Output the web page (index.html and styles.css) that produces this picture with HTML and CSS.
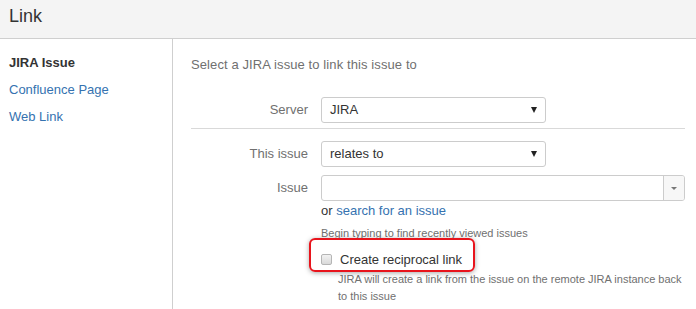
FILE: index.html
```html
<!DOCTYPE html>
<html lang="en">
<head>
    <meta charset="UTF-8">
    <title>Link</title>
    <link rel="stylesheet" href="styles.css">
</head>
<body>
    <header class="dialog-header">
        <h2 class="dialog-title">Link</h2>
    </header>
    <div class="dialog-body">
        <nav class="dialog-menu">
            <div class="menu-item selected">JIRA Issue</div>
            <a class="menu-item" href="#">Confluence Page</a>
            <a class="menu-item" href="#">Web Link</a>
        </nav>
        <div class="dialog-panel">
            <p class="intro">Select a JIRA issue to link this issue to</p>

            <div class="field-group">
                <label class="field-label">Server</label>
                <div class="select">
                    <span>JIRA</span>
                    <span class="select-arrow"></span>
                </div>
            </div>

            <hr class="divider">

            <div class="field-group">
                <label class="field-label">This issue</label>
                <div class="select">
                    <span>relates to</span>
                    <span class="select-arrow"></span>
                </div>
            </div>

            <div class="field-group issue-group">
                <label class="field-label">Issue</label>
                <div class="issue-picker">
                    <span class="issue-input"></span>
                    <span class="issue-trigger"><span class="trigger-arrow"></span></span>
                </div>
            </div>

            <div class="field-extra">
                <div class="search-line">or <a href="#">search for an issue</a></div>
                <div class="hint">Begin typing to find recently viewed issues</div>
                <div class="checkbox-row">
                    <span class="checkbox"></span>
                    <span>Create reciprocal link</span>
                    <span class="highlight"></span>
                </div>
                <div class="checkbox-desc">JIRA will create a link from the issue on the remote JIRA instance back to this issue</div>
            </div>
        </div>
    </div>
</body>
</html>
```

FILE: styles.css
```css
* {
    box-sizing: border-box;
    margin: 0;
    padding: 0;
}

html, body {
    height: 100%;
}

body {
    font-family: 'Liberation Sans', Arial, sans-serif;
    font-size: 13px;
    color: #333;
    background: #fff;
    display: flex;
    flex-direction: column;
    overflow: hidden;
}

a {
    color: #3572b0;
    text-decoration: none;
}

.dialog-header {
    height: 39px;
    background: #f4f4f4;
    border-bottom: 1px solid #cfcfcf;
    padding: 0 9px;
}

.dialog-title {
    font-size: 18px;
    font-weight: normal;
    line-height: 33px;
    color: #333;
}

.dialog-body {
    flex: 1;
    display: flex;
}

.dialog-menu {
    width: 173px;
    border-right: 1px solid #cfcfcf;
    padding: 10px 9px 0;
    display: flex;
    flex-direction: column;
}

.menu-item {
    line-height: 27px;
}

.menu-item.selected {
    font-weight: bold;
}

.dialog-panel {
    flex: 1;
    padding: 16px 11px 0 18px;
}

.intro {
    line-height: 20px;
    color: #707070;
    letter-spacing: 0.1px;
    margin-bottom: 22px;
}

.field-group {
    display: grid;
    grid-template-columns: 117px 1fr;
    column-gap: 13px;
    align-items: start;
}

.field-label {
    text-align: right;
    line-height: 26px;
    color: #707070;
}

.select {
    width: 225px;
    height: 26px;
    border: 1px solid #ccc;
    border-radius: 3px;
    padding: 0 8px 0 8px;
    display: flex;
    align-items: center;
    justify-content: space-between;
    line-height: 24px;
    color: #333;
}

.select-arrow {
    width: 0;
    height: 0;
    border-left: 3px solid transparent;
    border-right: 3px solid transparent;
    border-top: 6px solid #222;
}

.divider {
    border: 0;
    border-top: 1px solid #d9d9d9;
    margin: 5px 0 12px;
}

.issue-group {
    margin-top: 8px;
}

.issue-picker {
    height: 26px;
    border: 1px solid #ccc;
    border-radius: 3px;
    display: flex;
}

.issue-input {
    flex: 1;
}

.issue-trigger {
    width: 21px;
    border-left: 1px solid #ccc;
    background: #f7f7f7;
    border-radius: 0 2px 2px 0;
    display: flex;
    align-items: center;
    justify-content: center;
}

.trigger-arrow {
    width: 0;
    height: 0;
    border-left: 3px solid transparent;
    border-right: 3px solid transparent;
    border-top: 3px solid #777;
}

.field-extra {
    padding-left: 130px;
}

.search-line {
    line-height: 20px;
    color: #333;
}

.hint {
    font-size: 11px;
    line-height: 16px;
    color: #707070;
    margin-top: 4px;
}

.checkbox-row {
    position: relative;
    display: flex;
    align-items: center;
    gap: 8px;
    height: 22px;
    margin-top: 7px;
    color: #333;
}

.checkbox {
    width: 11px;
    height: 11px;
    border: 1px solid #b5b5b5;
    border-radius: 2px;
    background: linear-gradient(#f2f2f2, #d9d9d9);
}

.highlight {
    position: absolute;
    top: -10px;
    left: -12px;
    width: 166px;
    height: 34px;
    border: 2px solid #e8141c;
    border-radius: 6px;
    box-shadow: 0 1px 5px rgba(0, 0, 0, 0.35);
}

.checkbox-desc {
    padding-left: 17px;
    font-size: 11px;
    line-height: 17px;
    color: #707070;
    margin-top: 1px;
}
```
